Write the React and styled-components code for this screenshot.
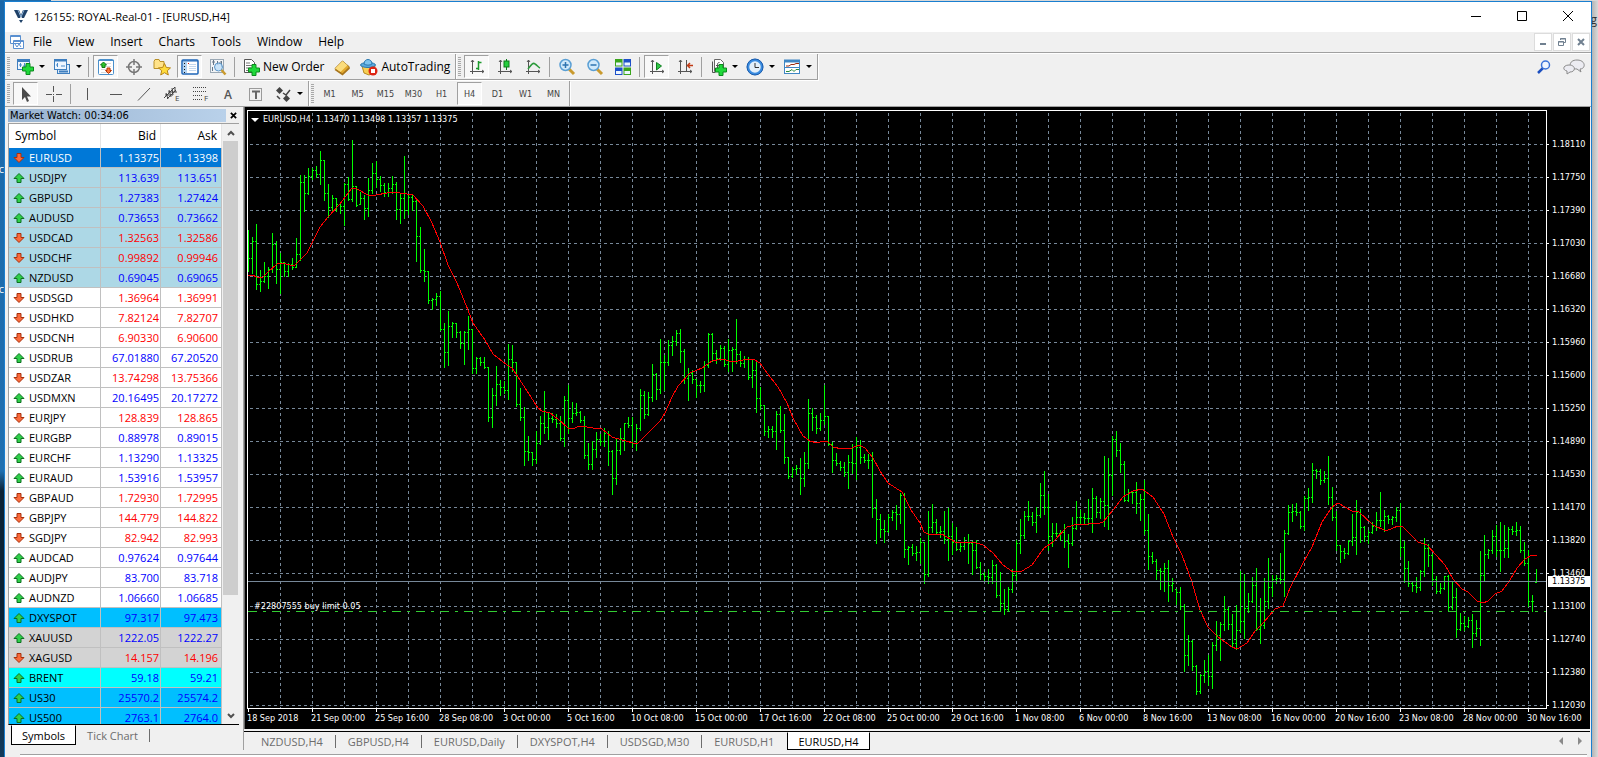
import React from 'react';
import styled, { createGlobalStyle, css } from 'styled-components';

const GlobalStyle = createGlobalStyle`
  * {
    box-sizing: border-box;
  }

  body {
    margin: 0;
    background: #1565a5;
    color: #000;
    font-family: 'Open Sans', 'Noto Sans', sans-serif;
    font-size: 12px;
    overflow: hidden;
  }

  button {
    margin: 0;
    padding: 0;
    border: 0;
    background: none;
    color: inherit;
    font: inherit;
  }

  ul, ol {
    margin: 0;
    padding: 0;
    list-style: none;
  }

  svg {
    display: block;
    flex: none;
  }
`;

/* ---------- data ---------- */

const menus = ['File', 'View', 'Insert', 'Charts', 'Tools', 'Window', 'Help'];

const timeframes = ['M1', 'M5', 'M15', 'M30', 'H1', 'H4', 'D1', 'W1', 'MN'];

const chartTabs = ['NZDUSD,H4', 'GBPUSD,H4', 'EURUSD,Daily', 'DXYSPOT,H4', 'USDSGD,M30', 'EURUSD,H1', 'EURUSD,H4'];

const quotes = [
  ['EURUSD', '1.13375', '1.13398', 'down', '#0078d7'],
  ['USDJPY', '113.639', '113.651', 'up', '#add8e6'],
  ['GBPUSD', '1.27383', '1.27424', 'up', '#add8e6'],
  ['AUDUSD', '0.73653', '0.73662', 'up', '#add8e6'],
  ['USDCAD', '1.32563', '1.32586', 'down', '#add8e6'],
  ['USDCHF', '0.99892', '0.99946', 'down', '#add8e6'],
  ['NZDUSD', '0.69045', '0.69065', 'up', '#add8e6'],
  ['USDSGD', '1.36964', '1.36991', 'down'],
  ['USDHKD', '7.82124', '7.82707', 'down'],
  ['USDCNH', '6.90330', '6.90600', 'down'],
  ['USDRUB', '67.01880', '67.20520', 'up'],
  ['USDZAR', '13.74298', '13.75366', 'down'],
  ['USDMXN', '20.16495', '20.17272', 'up'],
  ['EURJPY', '128.839', '128.865', 'down'],
  ['EURGBP', '0.88978', '0.89015', 'up'],
  ['EURCHF', '1.13290', '1.13325', 'up'],
  ['EURAUD', '1.53916', '1.53957', 'up'],
  ['GBPAUD', '1.72930', '1.72995', 'down'],
  ['GBPJPY', '144.779', '144.822', 'down'],
  ['SGDJPY', '82.942', '82.993', 'down'],
  ['AUDCAD', '0.97624', '0.97644', 'up'],
  ['AUDJPY', '83.700', '83.718', 'up'],
  ['AUDNZD', '1.06660', '1.06685', 'up'],
  ['DXYSPOT', '97.317', '97.473', 'up', '#00bfff'],
  ['XAUUSD', '1222.05', '1222.27', 'up', '#d3d3d3'],
  ['XAGUSD', '14.157', '14.196', 'down', '#d3d3d3'],
  ['BRENT', '59.18', '59.21', 'up', '#00ffff'],
  ['US30', '25570.2', '25574.2', 'up', '#00bfff'],
  ['US500', '2763.1', '2764.0', 'up', '#00bfff'],
];

const prices = [
  '1.18110', '1.17750', '1.17390', '1.17030', '1.16680', '1.16320', '1.15960', '1.15600', '1.15250',
  '1.14890', '1.14530', '1.14170', '1.13820', '1.13460', '1.13100', '1.12740', '1.12380', '1.12030',
];

const dates = [
  '18 Sep 2018', '21 Sep 00:00', '25 Sep 16:00', '28 Sep 08:00', '3 Oct 00:00', '5 Oct 16:00', '10 Oct 08:00',
  '15 Oct 00:00', '17 Oct 16:00', '22 Oct 08:00', '25 Oct 00:00', '29 Oct 16:00', '1 Nov 08:00', '6 Nov 00:00',
  '8 Nov 16:00', '13 Nov 08:00', '16 Nov 00:00', '20 Nov 16:00', '23 Nov 08:00', '28 Nov 00:00', '30 Nov 16:00',
];

// high, low, close of every bar, four pixels apart
const bars = `
230,271,258 237,273,241 224,289,284 270,291,281 262,282,276 267,288,269 233,272,244 241,283,269
253,293,262 262,276,271 263,276,264 258,269,267 238,267,254 175,260,182 175,211,193 168,194,176
168,179,170 166,177,174 151,184,160 160,200,193 184,217,207 195,211,198 198,211,204 202,213,206
183,225,184 177,200,199 140,201,186 186,206,205 192,204,198 195,219,208 178,216,190 163,193,173
161,187,179 176,191,185 183,196,192 183,196,188 176,193,184 182,219,209 194,223,198 156,218,210
195,214,197 194,210,201 199,261,236 227,272,270 249,281,271 271,303,300 298,309,299 293,305,296
291,330,329 323,367,352 311,365,326 322,337,323 323,337,332 331,348,343 331,364,332 316,349,329
329,373,368 357,373,358 357,365,362 357,368,367 367,421,417 388,427,395 366,405,384 380,395,387
381,393,390 344,399,359 345,371,362 362,406,404 388,420,417 407,465,451 436,460,452 452,465,459
431,463,443 416,444,423 391,433,427 412,439,418 413,422,419 414,427,423 416,440,438 396,446,400
385,433,418 402,422,413 403,415,412 411,422,420 416,458,455 443,469,464 441,469,449 432,457,439
434,445,441 428,446,433 431,465,451 450,494,478 439,484,450 428,454,438 423,450,423 417,427,425
417,447,443 424,450,428 389,430,395 391,418,414 392,415,397 364,401,374 373,399,389 339,393,362
355,390,362 340,365,345 336,355,341 330,345,333 329,362,351 349,383,378 368,400,373 370,383,379
379,397,385 381,392,385 361,391,365 333,367,334 333,361,353 350,363,358 345,360,348 346,366,364
339,371,350 347,371,349 319,363,354 351,366,363 356,367,359 357,379,377 360,387,370 360,412,398
387,409,405 405,435,431 426,437,429 426,437,431 411,449,414 406,432,430 414,463,457 457,478,476
467,477,469 465,474,468 458,494,478 452,486,463 399,468,413 408,430,417 415,433,428 413,430,420
385,424,416 416,445,444 442,472,460 453,465,463 461,470,467 462,476,472 455,488,462 444,473,463
437,479,447 440,463,457 454,462,460 454,468,460 452,517,508 499,543,519 514,537,529 520,542,531
514,532,517 510,520,512 505,529,514 493,523,495 493,557,549 546,564,547 544,555,553 546,560,552
538,563,542 542,583,574 511,576,527 504,532,522 519,533,532 526,537,531 511,543,539 508,560,536
523,554,542 527,550,549 542,551,546 537,549,542 534,563,543 541,574,550 540,568,567 562,579,574
572,580,576 569,583,577 560,583,565 564,597,595 572,611,603 589,614,609 587,610,589 569,592,575
540,581,543 519,553,535 511,538,516 501,520,516 512,525,522 507,532,515 483,517,495 471,514,507
494,550,536 523,546,533 523,536,533 530,540,532 524,547,541 534,567,543 517,545,528 501,529,517
510,524,517 513,524,518 499,524,518 488,532,498 496,517,512 498,518,501 456,526,505 458,529,475
436,495,439 431,456,450 443,472,464 461,501,500 489,501,492 491,503,492 482,513,503 494,520,499
480,534,530 514,569,556 552,563,561 559,579,570 568,589,571 563,591,568 560,601,585 578,591,583
589,604,592 587,609,606 604,671,655 635,665,641 640,670,666 665,694,691 674,693,675 660,682,671
655,685,676 642,688,645 621,650,635 622,660,624 596,630,609 607,629,624 614,647,643 605,649,630
571,632,621 574,638,608 593,612,601 577,602,585 568,630,629 598,643,625 578,628,601 558,608,587
575,596,579 575,583,578 553,583,579 530,596,533 505,534,512 504,521,511 503,515,512 511,528,526
496,530,498 488,510,497 463,502,470 469,478,471 469,484,480 471,482,478 456,504,497 487,520,517
511,550,545 545,562,551 548,558,553 540,554,541 514,545,537 500,554,512 509,542,527 526,541,536
530,543,532 522,533,526 512,530,520 492,526,520 510,531,516 515,523,519 516,524,517 507,521,510
503,556,547 541,582,568 561,586,583 581,591,585 577,592,587 570,590,571 538,576,548 544,566,555
554,585,579 576,593,591 583,593,588 576,589,576 575,611,607 582,609,597 588,637,629 613,630,623
616,630,626 617,627,620 614,647,633 620,636,628 551,645,575 535,581,554 549,558,550 530,553,536
525,556,550 522,571,550 525,557,548 527,557,529 526,534,531 522,535,530 526,552,550 542,565,563
550,606,601 595,611,601 569,582,581`.trim().split(/\s+/).map((bar) => bar.split(',').map(Number));

const average = `248,275 252,275 257,277 262,278 268,272 277,264 282,263 290,265 295,265 307,253 312,243 320,227
328,217 340,204 352,188 357,189 368,195 376,195 387,193 393,192 400,193 413,195 423,206 432,223 440,242 448,265
457,283 468,310 473,323 485,340 493,354 507,365 512,368 518,377 538,408 542,411 550,413 558,419 568,428 572,429
580,426 593,428 602,429 612,437 622,440 637,444 645,436 660,421 665,413 672,397 678,386 690,373 702,368 712,361
722,359 733,362 743,360 753,359 760,363 767,373 778,387 787,403 793,418 803,436 810,441 817,443 823,441 828,442
833,447 842,449 852,448 859,445 865,448 873,458 880,471 888,483 902,492 911,510 920,523 924,532 928,534 942,534
955,542 973,542 983,545 993,553 1003,565 1013,572 1022,571 1032,565 1044,548 1053,542 1067,527 1078,524 1088,524
1092,523 1097,524 1103,522 1113,510 1123,497 1133,491 1142,489 1153,497 1164,514 1173,537 1182,555 1192,582
1200,610 1208,627 1218,637 1232,647 1237,649 1247,643 1255,631 1263,623 1275,609 1283,606 1290,588 1303,563
1312,547 1322,522 1332,507 1338,503 1352,511 1358,511 1373,525 1386,531 1398,526 1403,527 1418,542 1427,545
1445,565 1453,579 1462,589 1468,592 1477,601 1483,603 1488,601 1495,594 1502,591 1510,580 1517,568 1525,559
1532,555 1537,555`;

/* ---------- icons ---------- */

const Plus = ({ x = 8, y = 7 }) => (
  <path
    transform={`translate(${x} ${y})`}
    d="M4 .5h4v3.500h3.500v4H8v3.500H4V8H.5V4H4z"
    fill="#1fd83a"
    stroke="#0a8a1c"
  />
);

const Icon = ({ size = 18, children }) => (
  <svg width={size} height={size} viewBox="0 0 18 18" fill="none" aria-hidden="true">
    {children}
  </svg>
);

const Axes = () => <path d="M4.500 2v14M2 13.500h14M3 4l1.500-2L6 4M14 12l2 1.500-2 1.500" stroke="#555" />;

const icons = {
  newChart: (
    <>
      <rect x="1.500" y="1.500" width="12" height="10" fill="#eef6ff" stroke="#3f7fbf" />
      <path d="M1 3h13" stroke="#3f7fbf" strokeWidth="2" />
      <path d="M4.500 5v4M3 7h3M8.500 5v4M7 8h3" stroke="#4a8ac8" />
      <Plus x={6} y={5} />
    </>
  ),
  profiles: (
    <>
      <rect x="4.500" y="6.500" width="12" height="9" fill="#dcecfb" stroke="#3f7fbf" />
      <rect x="1.500" y="1.500" width="12" height="10" fill="#eef6ff" stroke="#3f7fbf" />
      <path d="M1 2.500h13M6 13.500h9" stroke="#3f7fbf" strokeWidth="2" />
      <path d="M4.500 5v4M3 7h2M8 8h4" stroke="#4a8ac8" />
    </>
  ),
  marketWatch: (
    <>
      <rect x="1.500" y="1.500" width="15" height="15" rx="1" fill="#fff" stroke="#4a90cc" />
      <path d="M1 2.500h16" stroke="#4a90cc" />
      <path d="M4 5.500h10M4 8.500h10M4 11.500h10M4 14.500h10" stroke="#d8d8d8" />
      <path d="M6.500 4l3 3H8v2.500H5V7H3.500z" fill="#2cc52c" stroke="#0c7a14" />
      <path d="M11.500 15.500l-3-3H10V10h3v2.500h1.500z" fill="#ff7a3a" stroke="#b53408" />
    </>
  ),
  crosshair: (
    <>
      <circle cx="9" cy="9" r="5.500" stroke="#777" strokeWidth="1.500" />
      <path d="M9 1v6M9 11v6M1 9h6M11 9h6" stroke="#777" strokeWidth="1.500" />
    </>
  ),
  navigator: (
    <>
      <path d="M1 3.500l1-2h4l1 2h4v7H1z" fill="#ffe38a" stroke="#b8902a" />
      <path d="M11.500 5.500l1.800 4 4.200.4-3.200 2.800 1 4.300-3.800-2.300L7.700 17l1-4.300-3.200-2.800 4.200-.4z" fill="#ffdc3c" stroke="#b8861a" />
    </>
  ),
  terminal: (
    <>
      <rect x="1" y="2" width="16" height="14" rx="1" fill="#fff" stroke="#1e66b8" strokeWidth="1.500" />
      <path d="M1 3h16" stroke="#1e66b8" />
      <path d="M4 4v11" stroke="#b4d4f2" strokeWidth="4" />
      <path d="M3.500 5v10" stroke="#111" strokeDasharray="1 2" />
      <path d="M8 6.500h7M8 8.500h7M8 10.500h7M8 12.500h7" stroke="#c3d8ee" />
      <path d="M7.500 5v1" stroke="#e01010" />
    </>
  ),
  tester: (
    <>
      <rect x="1.500" y="1.500" width="13" height="13" fill="#f2f4f6" stroke="#9aa8b4" />
      <path d="M4.500 2v5M3 4h3M8.500 3v4l4-4v6M3.500 9v4" stroke="#66788a" />
      <circle cx="9.500" cy="9" r="4" fill="#bfe0fa" fillOpacity=".8" stroke="#5b95c8" />
      <path d="M12.500 12l4 4.500" stroke="#c99a2e" strokeWidth="2.500" />
    </>
  ),
  newOrder: (
    <>
      <path d="M2.500 1.500h7l3 3v10h-10z" fill="#fff" stroke="#555" />
      <path d="M4 5h4M4 7.500h6M4 10h5M4 12.500h3" stroke="#777" />
      <Plus x={6} y={6} />
    </>
  ),
  editor: (
    <>
      <path d="M2 10.500L9.500 3l7 6-7 7z" fill="#e2a92e" stroke="#9a6a12" />
      <path d="M2 10.500L9.500 3l5 4.300L7.500 14z" fill="#fbdc7c" />
      <path d="M2 11.500l7.500 5 7-6.500" stroke="#a8741a" strokeWidth="1.500" />
    </>
  ),
  robot: (
    <>
      <path d="M2 8l2 7 5 2 4-2 2-7z" fill="#f6cf54" stroke="#b88a1c" />
      <ellipse cx="8" cy="7" rx="7.500" ry="2.500" fill="#58a8dc" stroke="#2a78ae" />
      <path d="M4 6c0-6 8-6 8 0-2 1.500-6 1.500-8 0z" fill="#7cc3ee" stroke="#2a78ae" />
      <circle cx="13" cy="13" r="4.500" fill="#dd2413" />
      <rect x="11" y="11" width="4" height="4" fill="#fff" />
    </>
  ),
  barChart: (
    <>
      <Axes />
      <path d="M10.500 3v9M8 10.500h2M11 4.500h2.500" stroke="#1c9a2c" strokeWidth="1.500" />
    </>
  ),
  candles: (
    <>
      <Axes />
      <path d="M10.500 1v11" stroke="#0c7a1a" />
      <rect x="8" y="3" width="5" height="6" fill="#25cf3d" stroke="#0c7a1a" />
    </>
  ),
  lineChart: (
    <>
      <Axes />
      <path d="M4 11c3-4 5-7 7-5 2 1 3 3 5 4" stroke="#2a9a3a" strokeWidth="1.500" />
    </>
  ),
  zoomIn: (
    <>
      <path d="M11 11l5 5" stroke="#c99a2e" strokeWidth="3" />
      <circle cx="7.500" cy="7" r="5.500" fill="#cfe9fb" stroke="#5a9fd4" strokeWidth="1.500" />
      <path d="M4.500 7h6M7.500 4v6" stroke="#2d73b0" strokeWidth="1.500" />
    </>
  ),
  zoomOut: (
    <>
      <path d="M11 11l5 5" stroke="#c99a2e" strokeWidth="3" />
      <circle cx="7.500" cy="7" r="5.500" fill="#cfe9fb" stroke="#5a9fd4" strokeWidth="1.500" />
      <path d="M4.500 7h6" stroke="#2d73b0" strokeWidth="1.500" />
    </>
  ),
  tile: (
    <>
      <path d="M1 1h7.500v7.500H1z" fill="#3aa51c" />
      <path d="M9.500 1H17v7.500H9.500z" fill="#1d50c8" />
      <path d="M1 9.500h7.500v7.500H1z" fill="#1d50c8" />
      <path d="M9.500 9.500H17v7.500H9.500z" fill="#3aa51c" />
      <path d="M2 4.500h5.500v3H2zM10.500 4.500H16v3h-5.500zM2 13h5.500v3H2zM10.500 13H16v3h-5.500z" fill="#eef7ff" />
    </>
  ),
  autoScroll: (
    <>
      <Axes />
      <path d="M8.500 4.500l5 3.500-5 4z" fill="#2fc845" stroke="#0f7f20" />
    </>
  ),
  chartShift: (
    <>
      <Axes />
      <path d="M10.500 2v11" stroke="#555" />
      <path d="M17 7.500h-5M14 5l-2.500 2.500L14 10" stroke="#c03a14" strokeWidth="1.500" />
    </>
  ),
  indicators: (
    <>
      <path d="M5.500 1.500h6l3 3v9h-9z" fill="#fff" stroke="#666" />
      <path d="M3.500 3.500v11h3M10.500 4.500c-2 0-2 1-2 3v4M7 7.500h4" stroke="#555" />
      <Plus x={6} y={6} />
    </>
  ),
  clock: (
    <>
      <circle cx="9" cy="9" r="7" fill="#e4f0fa" stroke="#3a8ce0" strokeWidth="2.500" />
      <circle cx="9" cy="9" r="8" stroke="#1c5cac" />
      <path d="M9 5v4.500h4" stroke="#333" />
    </>
  ),
  templates: (
    <>
      <rect x="1.500" y="2.500" width="15" height="13" fill="#fff" stroke="#3f86c4" />
      <path d="M1 3h16" stroke="#3f86c4" strokeWidth="3" />
      <path d="M2 9.500h14" stroke="#3f86c4" />
      <path d="M3 8h3l2-1.500h3l2-1h3" stroke="#9a2a10" />
      <path d="M3 13.500h3l3-2 2 2 2-2h3" stroke="#2a8a3a" />
    </>
  ),
  cursor: <path d="M5 2v13l3-3 2 5 2-1-2-4.500h4z" fill="#4a4a4a" />,
  cross: <path d="M8.500 1v6M8.500 11v6M1 9.500h6M11 9.500h6M8 9.500h1" stroke="#555" />,
  vLine: <path d="M8.500 3v12" stroke="#555" />,
  hLine: <path d="M3 9.500h12" stroke="#555" />,
  trend: <path d="M3 15.500L15 3" stroke="#555" />,
  channel: (
    <>
      <path d="M1 13L12 2M4 14l9-9M3 8l2 6M6 5l2 7M9 3l1 7M12 2v5M2 10h8M5 7h9" stroke="#444" />
      <text x="12" y="16" fontSize="8" fill="#444">E</text>
    </>
  ),
  fibo: (
    <>
      <path d="M2 2.500h14M2 6.500h14M2 10.500h10M2 14.500h9" stroke="#444" strokeDasharray="1 1" />
      <text x="13" y="16" fontSize="8" fill="#444">F</text>
    </>
  ),
  text: <text x="5" y="14" fontSize="12" fontWeight="600" fill="#555">A</text>,
  label: (
    <>
      <rect x="2.500" y="3.500" width="12" height="12" stroke="#444" strokeDasharray="1 1" />
      <path d="M5 6.500h8M9 6v8" stroke="#666" strokeWidth="2" />
    </>
  ),
  arrows: (
    <>
      <path d="M5.500 2L9 5.500 5.500 9 2 5.500z" fill="#444" />
      <path d="M12.500 10l3.500 3.500-3.500 3.500L9 13.500z" fill="#444" />
      <path d="M3 11l3 3M9 8l3 2 4-5" stroke="#444" strokeWidth="1.500" />
    </>
  ),
};

const Direction = ({ up }) => (
  <svg width="12" height="12" viewBox="0 0 12 12" aria-hidden="true">
    {up ? (
      <path d="M6 1.500L11 6.500H8v4H4v-4H1z" fill="#2fd04a" stroke="#0d7020" />
    ) : (
      <path d="M6 10.500L1 5.500h3v-4h4v4h3z" fill="#fb6a3a" stroke="#a8300c" />
    )}
  </svg>
);

const Logo = () => (
  <svg width="14" height="14" viewBox="0 0 14 14" aria-hidden="true">
    <path d="M0 1h5l2 5 2-5h5l-4 8H8L7 7 6 9H4z" fill="#1f4168" />
    <path d="M4 1l3 7 3-7" stroke="#8fb4d8" fill="none" />
    <path d="M5 11h4l-2 3z" fill="#1f4168" />
  </svg>
);

/* ---------- window frame ---------- */

const Desktop = styled.div`
  display: grid;
  grid-template-columns: 4px minmax(0, 1fr) 6px;
  height: 100vh;
  padding-top: 1px;
  background: linear-gradient(90deg, #1f6cab 51px, #d8d8d8 51px);
`;

const Backdrop = styled.div`
  display: flex;
  flex-direction: column;
  align-items: flex-end;
  gap: 104px;
  padding-top: 160px;
  overflow: hidden;
  color: #fff;
  font-size: 11px;
  line-height: 16px;
  background: linear-gradient(#1b67a8 0, #1f6fb0 470px, #0b2235 490px, #0b2235 640px, #123a5a);
`;

const Shade = styled.div`
  display: flex;
  justify-content: flex-end;
  padding: 10px 1px 0 0;
  overflow: hidden;
  color: #333;
  background: linear-gradient(90deg, #b4b4b4, #d9d9d9);
`;

const AppWindow = styled.div`
  display: flex;
  flex-direction: column;
  min-width: 0;
  min-height: 0;
  background: #f0f0f0;
  border: solid #1a7fd0;
  border-width: 1px 1px 0;
`;

const TitleBar = styled.header`
  display: flex;
  align-items: center;
  flex: none;
  height: 30px;
  padding: 0 0 2px 9px;
  background: #fff;
`;

const Title = styled.h1`
  flex: 1;
  margin: 0;
  padding-left: 6px;
  font-size: 11px;
  font-weight: 400;
`;

const WindowButton = styled.button`
  display: flex;
  align-items: center;
  justify-content: center;
  width: 46px;
  height: 28px;
`;

const MenuBar = styled.nav`
  display: flex;
  align-items: center;
  flex: none;
  height: 21px;
  padding-left: 5px;
  border-bottom: 1px solid #a0a0a0;
  box-shadow: 0 1px #fff;
`;

const MenuItem = styled.button`
  padding: 0 8px;
  line-height: 20px;
`;

const ChildButtons = styled.div`
  display: flex;
  gap: 1px;
  margin-left: auto;
  padding-right: 1px;
`;

const ChildButton = styled.button`
  display: flex;
  align-items: center;
  justify-content: center;
  width: 18px;
  height: 18px;
  border: 1px solid #dcdcdc;
  background: #fff;
`;

/* ---------- toolbars ---------- */

const ToolRow = styled.div`
  display: flex;
  flex: none;
  height: ${(p) => p.$height};
  padding-top: 1px;
`;

const ToolGroup = styled.div`
  display: flex;
  align-items: center;
  gap: 3px;
  padding: 0 3px 0 2px;
  border-right: 1px solid #a0a0a0;
  border-bottom: ${(p) => (p.$underline ? '1px solid #a0a0a0' : '0')};
  box-shadow: 1px 1px #fff;
`;

const Grip = styled.span`
  width: 3px;
  height: 20px;
  background: repeating-linear-gradient(#a8a8a8 0 1px, transparent 1px 2px);
`;

const Divider = styled.span`
  width: 1px;
  height: 20px;
  margin: 0 1px;
  background: #a0a0a0;
`;

const ToolButton = styled.button`
  display: flex;
  align-items: center;
  justify-content: center;
  min-width: 25px;
  height: 23px;
  border: 1px solid transparent;

  ${(p) => p.$pressed && css`
    border-color: #a0a0a0 #fff #fff #a0a0a0;
    background: #f8f8f8;
  `}
`;

const MenuToolButton = styled(ToolButton)`
  width: 34px;
  gap: 5px;

  &::after {
    content: '';
    border: solid transparent;
    border-width: 3px 3px 0;
    border-top-color: #000;
  }
`;

const WideButton = styled(ToolButton)`
  gap: 3px;
  padding: 0 1px 0 2px;
`;

const Timeframe = styled(ToolButton)`
  color: #444;
  font: 9px 'DejaVu Sans Condensed', 'DejaVu Sans', sans-serif;
`;

const ToolLinks = styled.div`
  display: flex;
  align-items: center;
  gap: 12px;
  margin-left: auto;
  padding-right: 6px;
`;

/* ---------- market watch ---------- */

const Workspace = styled.main`
  display: grid;
  grid-template-columns: 239px minmax(0, 1fr);
  flex: 1;
  min-height: 0;
  border-top: 1px solid #a0a0a0;
`;

const Panel = styled.section`
  display: flex;
  flex-direction: column;
  min-height: 0;
  padding: 1px 4px 5px 3px;
  border-right: 1px solid #a0a0a0;
`;

const PanelTitle = styled.div`
  display: flex;
  justify-content: space-between;
  align-items: center;
  flex: none;
  height: 14px;
`;

const PanelName = styled.h2`
  flex: 1;
  margin: 0;
  padding-left: 2px;
  font: 11px/13px 'DejaVu Sans Condensed', 'DejaVu Sans', sans-serif;
  background: linear-gradient(90deg, #99b4d1, #b9d1ea);
`;

const CloseButton = styled.button`
  display: flex;
  justify-content: flex-end;
  width: 13px;
  padding-right: 2px;
`;

const QuoteArea = styled.div`
  display: flex;
  flex: 1;
  min-height: 0;
  margin-top: 1px;
  border: 1px solid #a0a0a0;
  border-bottom-color: #000;
  border-right: 0;
`;

const QuoteClip = styled.div`
  flex: 1;
  overflow: hidden;
  background: #fff;
`;

const QuoteTable = styled.table`
  width: 100%;
  border-collapse: separate;
  border-spacing: 0;
  table-layout: fixed;
`;

const HeadCell = styled.th`
  width: ${(p) => p.$width};
  height: 24px;
  padding: 0 4px 2px 6px;
  border-right: 1px solid #e5e5e5;
  font-weight: 400;
  text-align: ${(p) => p.$align || 'right'};
`;

const QuoteRow = styled.tr`
  background: ${(p) => p.$fill || '#fff'};
  color: ${(p) => (p.$selected ? '#fff' : '#000')};
`;

const Cell = styled.td`
  height: 20px;
  padding: 0 1px;
  border: solid #c0c0c0;
  border-width: 0 1px 1px 0;
  color: ${(p) => p.$color || 'inherit'};
  font-size: 11px;
  line-height: 18px;
  text-align: right;

  &:last-child {
    padding-right: 3px;
  }
`;

const SymbolCell = styled.div`
  display: flex;
  align-items: center;
  gap: 4px;
  padding-left: 3px;
`;

const Scroller = styled.div`
  display: flex;
  flex-direction: column;
  width: 17px;
  padding: 0 1px;
`;

const ScrollButton = styled.button`
  display: flex;
  align-items: center;
  justify-content: center;
  height: 17px;

  &:last-child {
    margin-top: auto;
  }
`;

const Thumb = styled.div`
  height: 454px;
  background: #cdcdcd;
`;

const PanelTabs = styled.div`
  display: flex;
  flex: none;
  height: 20px;
  padding-left: 3px;
`;

const Tab = styled.button`
  display: flex;
  align-items: center;
  padding: ${(p) => (p.$tight ? '0 10px' : '0 12px')};
  border: 1px solid transparent;
  color: #6d6d6d;
  font-size: 11px;

  ${(p) => p.$active && css`
    padding: 0 10px;
    border-color: #fff #000 #000;
    background: #fff;
    color: #000;
  `}
`;

const TabDivider = styled.span`
  align-self: center;
  width: 1px;
  height: 13px;
  margin: ${(p) => (p.$tight ? '0' : '0 -1px')};
  background: #6d6d6d;
`;

/* ---------- chart ---------- */

const ChartArea = styled.section`
  display: flex;
  flex-direction: column;
  min-width: 0;
  min-height: 0;
  padding-right: 1px;
`;

const ChartWindow = styled.div`
  display: grid;
  grid-template: minmax(0, 1fr) 20px / minmax(0, 1fr) 43px;
  flex: 1;
  min-height: 0;
  padding: 3px 0 0 2px;
  border-left: 1px solid #696969;
  background: #000;
  color: #fff;
  font: 9px/13px 'DejaVu Sans Condensed', 'DejaVu Sans', sans-serif;
  overflow: hidden;
`;

const Plot = styled.div`
  position: relative;
  border: 1px solid #fff;
`;

const PlotSvg = styled.svg`
  position: absolute;
  inset: 0;
`;

const Caption = styled.div`
  position: absolute;
  top: 2px;
  left: 3px;
  display: flex;
  align-items: center;
  gap: 4px;
  white-space: pre;

  &::before {
    content: '';
    border: solid transparent;
    border-width: 4px 4px 0;
    border-top-color: #fff;
  }
`;

const OrderLabel = styled.div`
  position: absolute;
  top: 489px;
  left: 6px;
`;

const PriceAxis = styled.ol`
  position: relative;
  padding-top: 18px;
`;

const Price = styled.li`
  display: flex;
  align-items: center;
  gap: 3px;
  height: 33px;

  &::before {
    content: '';
    width: 2px;
    height: 1px;
    background: #fff;
  }
`;

const BidPrice = styled.li`
  position: absolute;
  top: 466px;
  left: 1px;
  right: 0;
  padding-left: 4px;
  background: #fff;
  color: #000;
  line-height: 11px;
`;

const TimeAxis = styled.ol`
  grid-column: 1 / -1;
  display: flex;
  min-width: 0;
`;

const Time = styled.li`
  flex: 0 0 64px;
  white-space: nowrap;

  &::before {
    content: '';
    display: block;
    width: 1px;
    height: 3px;
    margin-left: 1px;
    background: #fff;
  }
`;

const ChartTabs = styled.div`
  display: flex;
  align-items: stretch;
  flex: none;
  height: 19px;
  margin-top: 2px;
  padding-left: 4px;
  border-top: 1px solid #000;
`;

const TabArrows = styled.div`
  display: flex;
  align-items: center;
  gap: 11px;
  margin-left: auto;
  padding-right: 6px;
`;

const Footer = styled.footer`
  flex: none;
  height: 7px;
  padding: 4px 4px 0 15px;

  &::before {
    content: '';
    display: block;
    height: 3px;
    border-top: 1px solid #a0a0a0;
    background: #fff;
  }
`;

const Tool = ({ name, label, pressed }) => (
  <ToolButton $pressed={pressed} aria-label={label}>
    <Icon>{icons[name]}</Icon>
  </ToolButton>
);

const MenuTool = ({ name, label }) => (
  <MenuToolButton aria-label={label}>
    <Icon>{icons[name]}</Icon>
  </MenuToolButton>
);

const Caret = ({ d, size = 8, color = '#505050', fill = 'none' }) => (
  <svg width={size} height={size} viewBox="0 0 8 8" fill={fill} aria-hidden="true">
    <path d={d} stroke={color} strokeWidth={fill === 'none' ? 2 : 0} />
  </svg>
);

const quoteColor = (direction, selected) => {
  if (selected) return '#fff';
  return direction === 'up' ? '#0000ff' : '#ff0000';
};

const barPath = bars.map(([high, low, close], i) => {
  const x = 248 + i * 4;
  const open = i ? Math.min(Math.max(bars[i - 1][2], high), low) : high + 8;
  return `M${x} ${high}h1v${low - high + 1}h-1zM${x - 1} ${open}h1v1h-1zM${x + 1} ${close}h1v1h-1z`;
}).join('');

const verticals = Array.from({ length: 60 }, (_, i) => 32 + i * 32);
const horizontals = Array.from({ length: 30 }, (_, i) => 33 + i * 33);

const PriceChart = () => (
  <PlotSvg width="100%" height="100%" shapeRendering="crispEdges" role="img" aria-label="EURUSD H4 bars">
    <g transform="translate(0.5 0.5)" stroke="#778899" strokeDasharray="3 3">
      {verticals.map((x) => <line key={x} x1={x} x2={x} y1="1" y2="100%" />)}
      {horizontals.map((y) => <line key={y} x1="1" x2="100%" y1={y} y2={y} />)}
    </g>
    <g transform="translate(-248 -111)">
      <path d={barPath} fill="#00ff00" />
      <polyline points={average} fill="none" stroke="#ff0000" />
    </g>
    <g transform="translate(0 0.5)">
      <line x1="0" x2="100%" y1="470" y2="470" stroke="#778899" />
      <line x1="0" x2="100%" y1="500" y2="500" stroke="#32cd32" strokeDasharray="9 6 3 6" />
    </g>
  </PlotSvg>
);

const MarketWatch = () => (
  <Panel>
    <PanelTitle>
      <PanelName>Market Watch: 00:34:06</PanelName>
      <CloseButton aria-label="Close market watch">
        <Caret d="M1 1l6 6M7 1L1 7" size={7} color="#000" />
      </CloseButton>
    </PanelTitle>
    <QuoteArea>
      <QuoteClip>
        <QuoteTable>
          <thead>
            <tr>
              <HeadCell $width="92px" $align="left">Symbol</HeadCell>
              <HeadCell $width="60px">Bid</HeadCell>
              <HeadCell>Ask</HeadCell>
            </tr>
          </thead>
          <tbody>
            {quotes.map(([symbol, bid, ask, direction, fill], i) => (
              <QuoteRow key={symbol} $fill={fill} $selected={i === 0}>
                <Cell>
                  <SymbolCell>
                    <Direction up={direction === 'up'} />
                    {symbol}
                  </SymbolCell>
                </Cell>
                <Cell $color={quoteColor(direction, i === 0)}>{bid}</Cell>
                <Cell $color={quoteColor(direction, i === 0)}>{ask}</Cell>
              </QuoteRow>
            ))}
          </tbody>
        </QuoteTable>
      </QuoteClip>
      <Scroller>
        <ScrollButton aria-label="Scroll up"><Caret d="M1 6l3-3 3 3" /></ScrollButton>
        <Thumb />
        <ScrollButton aria-label="Scroll down"><Caret d="M1 2l3 3 3-3" /></ScrollButton>
      </Scroller>
    </QuoteArea>
    <PanelTabs>
      <Tab $active $tight>Symbols</Tab>
      <Tab $tight>Tick Chart</Tab>
      <TabDivider $tight />
    </PanelTabs>
  </Panel>
);

const App = () => (
  <Desktop>
    <GlobalStyle />
    <Backdrop>
      <span>c</span>
      <span>c</span>
    </Backdrop>
    <AppWindow>
      <TitleBar>
        <Logo />
        <Title>126155: ROYAL-Real-01 - [EURUSD,H4]</Title>
        <WindowButton aria-label="Minimize">
          <svg width="10" height="10"><path d="M0 5.500h10" stroke="#000" /></svg>
        </WindowButton>
        <WindowButton aria-label="Maximize">
          <svg width="10" height="10"><path d="M.5.5h9v9h-9z" fill="none" stroke="#000" /></svg>
        </WindowButton>
        <WindowButton aria-label="Close">
          <svg width="10" height="10"><path d="M0 0l10 10M10 0L0 10" stroke="#000" /></svg>
        </WindowButton>
      </TitleBar>
      <MenuBar>
        <svg width="15" height="14" viewBox="0 0 15 14" fill="#fff" stroke="#5a90d0" aria-hidden="true">
          <path d="M.5.5h10v8H.5zM3.500 5.500h10v8h-10z" />
          <path d="M1 1.500h9M4 6.500h9" />
          <path d="M5 9l2 3 2-3 2 3" fill="none" />
        </svg>
        {menus.map((menu) => <MenuItem key={menu}>{menu}</MenuItem>)}
        <ChildButtons>
          <ChildButton aria-label="Minimize chart">
            <svg width="8" height="8"><path d="M1 6h6" stroke="#708090" strokeWidth="2" /></svg>
          </ChildButton>
          <ChildButton aria-label="Restore chart">
            <svg width="8" height="8" fill="none" stroke="#708090">
              <path d="M2.500 2V.5h5v4H6M.5 3.500h5v4h-5zM2 1h6M0 4h6" />
            </svg>
          </ChildButton>
          <ChildButton aria-label="Close chart">
            <svg width="8" height="8"><path d="M1 1l6 6M7 1L1 7" stroke="#708090" strokeWidth="2" /></svg>
          </ChildButton>
        </ChildButtons>
      </MenuBar>

      <ToolRow $height="27px">
        <ToolGroup $underline>
          <Grip />
          <MenuTool name="newChart" label="New chart" />
          <MenuTool name="profiles" label="Profiles" />
          <Divider />
          <Tool name="marketWatch" label="Market watch" pressed />
          <Tool name="crosshair" label="Data window" />
          <Tool name="navigator" label="Navigator" />
          <Tool name="terminal" label="Terminal" pressed />
          <Tool name="tester" label="Strategy tester" />
          <Divider />
          <WideButton><Icon>{icons.newOrder}</Icon>New Order</WideButton>
          <Tool name="editor" label="Editor" />
          <WideButton><Icon>{icons.robot}</Icon>AutoTrading</WideButton>
        </ToolGroup>
        <ToolGroup $underline>
          <Grip />
          <Tool name="barChart" label="Bar chart" pressed />
          <Tool name="candles" label="Candlesticks" />
          <Tool name="lineChart" label="Line chart" />
          <Divider />
          <Tool name="zoomIn" label="Zoom in" />
          <Tool name="zoomOut" label="Zoom out" />
          <Tool name="tile" label="Tile windows" />
          <Divider />
          <Tool name="autoScroll" label="Auto scroll" pressed />
          <Tool name="chartShift" label="Chart shift" />
          <Divider />
          <MenuTool name="indicators" label="Indicators" />
          <MenuTool name="clock" label="Periods" />
          <MenuTool name="templates" label="Templates" />
        </ToolGroup>
        <ToolLinks>
          <button aria-label="Search">
            <svg width="14" height="14" viewBox="0 0 14 14" fill="none">
              <path d="M6 8l-5 5" stroke="#1c4fc0" strokeWidth="2.500" />
              <circle cx="8.500" cy="5" r="4" fill="#eef5ff" stroke="#3a72d8" strokeWidth="1.500" />
            </svg>
          </button>
          <button aria-label="Chat">
            <svg width="22" height="16" viewBox="0 0 22 16" fill="#ececf2" stroke="#8a8a8a">
              <path d="M14 1c9 0 9 9 3 9l1 3-4-3c-9 0-9-9 0-9z" />
              <path d="M6 6c7 0 7 7 1 7l-3 2v-3C-1 11 0 6 6 6z" />
            </svg>
          </button>
        </ToolLinks>
      </ToolRow>

      <ToolRow $height="26px">
        <ToolGroup>
          <Grip />
          <Tool name="cursor" label="Cursor" pressed />
          <Tool name="cross" label="Crosshair" />
          <Divider />
          <Tool name="vLine" label="Vertical line" />
          <Tool name="hLine" label="Horizontal line" />
          <Tool name="trend" label="Trendline" />
          <Tool name="channel" label="Channel" />
          <Tool name="fibo" label="Fibonacci" />
          <Tool name="text" label="Text" />
          <Tool name="label" label="Text label" />
          <MenuTool name="arrows" label="Arrows" />
        </ToolGroup>
        <ToolGroup>
          <Grip />
          {timeframes.map((frame) => (
            <Timeframe key={frame} $pressed={frame === 'H4'}>{frame}</Timeframe>
          ))}
        </ToolGroup>
      </ToolRow>

      <Workspace>
        <MarketWatch />
        <ChartArea>
          <ChartWindow>
            <Plot>
              <PriceChart />
              <Caption>{'EURUSD,H4  1.13470 1.13498 1.13357 1.13375'}</Caption>
              <OrderLabel>#22807555 buy limit 0.05</OrderLabel>
            </Plot>
            <PriceAxis>
              {prices.map((price) => <Price key={price}>{price}</Price>)}
              <BidPrice>1.13375</BidPrice>
            </PriceAxis>
            <TimeAxis>
              {dates.map((date) => <Time key={date}>{date}</Time>)}
            </TimeAxis>
          </ChartWindow>
          <ChartTabs>
            {chartTabs.map((tab, i) => (
              <React.Fragment key={tab}>
                <Tab $active={i === chartTabs.length - 1}>{tab}</Tab>
                {i < chartTabs.length - 2 && <TabDivider />}
              </React.Fragment>
            ))}
            <TabArrows>
              <button aria-label="Previous tabs"><Caret d="M6 0v8L2 4z" fill="#8a8a8a" /></button>
              <button aria-label="Next tabs"><Caret d="M2 0v8l4-4z" fill="#8a8a8a" /></button>
            </TabArrows>
          </ChartTabs>
        </ChartArea>
      </Workspace>
      <Footer />
    </AppWindow>
    <Shade>g</Shade>
  </Desktop>
);

export default App;
